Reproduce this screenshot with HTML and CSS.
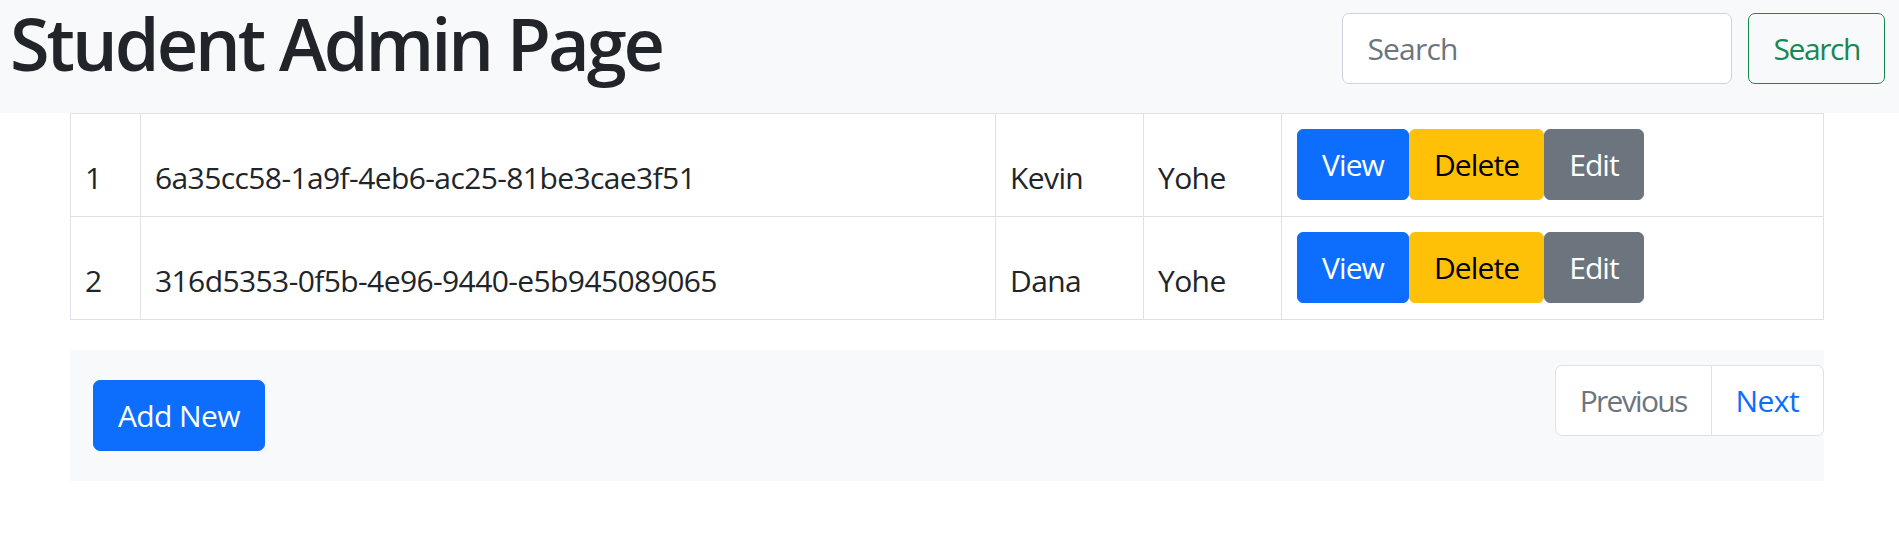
FILE: index.html
```html
<!DOCTYPE html>
<html lang="en">
<head>
<meta charset="utf-8">
<title>Student Admin Page</title>
<link rel="stylesheet" href="styles.css">
</head>
<body>
<header class="topbar">
  <h1 class="brand">Student Admin Page</h1>
  <form class="search">
    <input class="search-input" type="search" placeholder="Search">
    <button class="btn btn-outline-success" type="button">Search</button>
  </form>
</header>
<main class="content">
  <table class="students">
    <colgroup>
      <col class="c-num">
      <col class="c-id">
      <col class="c-first">
      <col class="c-last">
      <col class="c-actions">
    </colgroup>
    <tbody>
      <tr>
        <td>1</td>
        <td>6a35cc58-1a9f-4eb6-ac25-81be3cae3f51</td>
        <td>Kevin</td>
        <td>Yohe</td>
        <td class="actions">
          <div class="btn-row">
            <button class="btn btn-primary" type="button">View</button>
            <button class="btn btn-warning" type="button">Delete</button>
            <button class="btn btn-secondary" type="button">Edit</button>
          </div>
        </td>
      </tr>
      <tr>
        <td>2</td>
        <td>316d5353-0f5b-4e96-9440-e5b945089065</td>
        <td>Dana</td>
        <td>Yohe</td>
        <td class="actions">
          <div class="btn-row">
            <button class="btn btn-primary" type="button">View</button>
            <button class="btn btn-warning" type="button">Delete</button>
            <button class="btn btn-secondary" type="button">Edit</button>
          </div>
        </td>
      </tr>
    </tbody>
  </table>
  <div class="footer-bar">
    <button class="btn btn-primary add-new" type="button">Add New</button>
    <nav class="pager">
      <span class="page-link disabled">Previous</span>
      <a class="page-link" href="#">Next</a>
    </nav>
  </div>
</main>
</body>
</html>
```

FILE: styles.css
```css
* {
  box-sizing: border-box;
}

body {
  margin: 0;
  font-family: "Open Sans", "Noto Sans", sans-serif;
  font-size: 30px;
  line-height: 1.5;
  color: #212529;
  background: #ffffff;
  letter-spacing: -0.6px;
}

.topbar {
  display: flex;
  justify-content: space-between;
  align-items: flex-start;
  height: 113px;
  padding: 0 14px 0 10px;
  background: #f8f9fa;
}

.brand {
  margin: 0;
  font-size: 72px;
  font-weight: 600;
  line-height: 1.2;
  letter-spacing: -3px;
  color: #212529;
}

.search {
  display: flex;
  margin-top: 13px;
  gap: 16px;
}

.search-input {
  width: 390px;
  height: 71px;
  padding: 12px 24px;
  font: inherit;
  letter-spacing: -0.8px;
  color: #212529;
  background: #fff;
  border: 1px solid #ced4da;
  border-radius: 7px;
  outline: none;
}

.search-input::placeholder {
  color: #6c757d;
}

.btn {
  display: inline-block;
  height: 71px;
  padding: 12px 24px;
  font: inherit;
  letter-spacing: -0.6px;
  line-height: 1.5;
  border: 1px solid transparent;
  border-radius: 6px;
  cursor: pointer;
  white-space: nowrap;
}

.btn-outline-success {
  color: #198754;
  background: transparent;
  border-color: #198754;
  border-radius: 7px;
  letter-spacing: -1.4px;
}

.btn-primary {
  color: #fff;
  background: #0d6efd;
  border-color: #0d6efd;
}

.btn-warning {
  color: #000;
  background: #ffc107;
  border-color: #ffc107;
}

.btn-secondary {
  color: #fff;
  background: #6c757d;
  border-color: #6c757d;
}

.content {
  padding: 0 75px 0 70px;
}

.students {
  width: 100%;
  table-layout: fixed;
  border-collapse: collapse;
  border: 1px solid #dee2e6;
}

.c-num { width: 70px; }
.c-id { width: 855px; }
.c-first { width: 148px; }
.c-last { width: 138px; }

.students td {
  padding: 15px 14px 16px;
  border: 1px solid #dee2e6;
  vertical-align: bottom;
  white-space: nowrap;
}

.students td.actions {
  vertical-align: top;
  padding-left: 15px;
}

.btn-row {
  display: flex;
}

.btn-row .btn {
  letter-spacing: -0.9px;
}

.footer-bar {
  display: flex;
  justify-content: space-between;
  align-items: flex-start;
  height: 131px;
  margin-top: 30px;
  padding: 15px 0 15px 23px;
  background: #f8f9fa;
}

.add-new {
  margin-top: 15px;
  border-radius: 7px;
}

.pager {
  display: flex;
  height: 71px;
  background: #fff;
  border: 1px solid #dee2e6;
  border-radius: 7px;
}

.page-link {
  display: block;
  padding: 12px 24px;
  line-height: 45px;
  color: #0d6efd;
  text-decoration: none;
  letter-spacing: -1.7px;
}

.page-link + .page-link {
  border-left: 1px solid #dee2e6;
  letter-spacing: -0.6px;
}

.page-link.disabled {
  color: #6c757d;
}
```
